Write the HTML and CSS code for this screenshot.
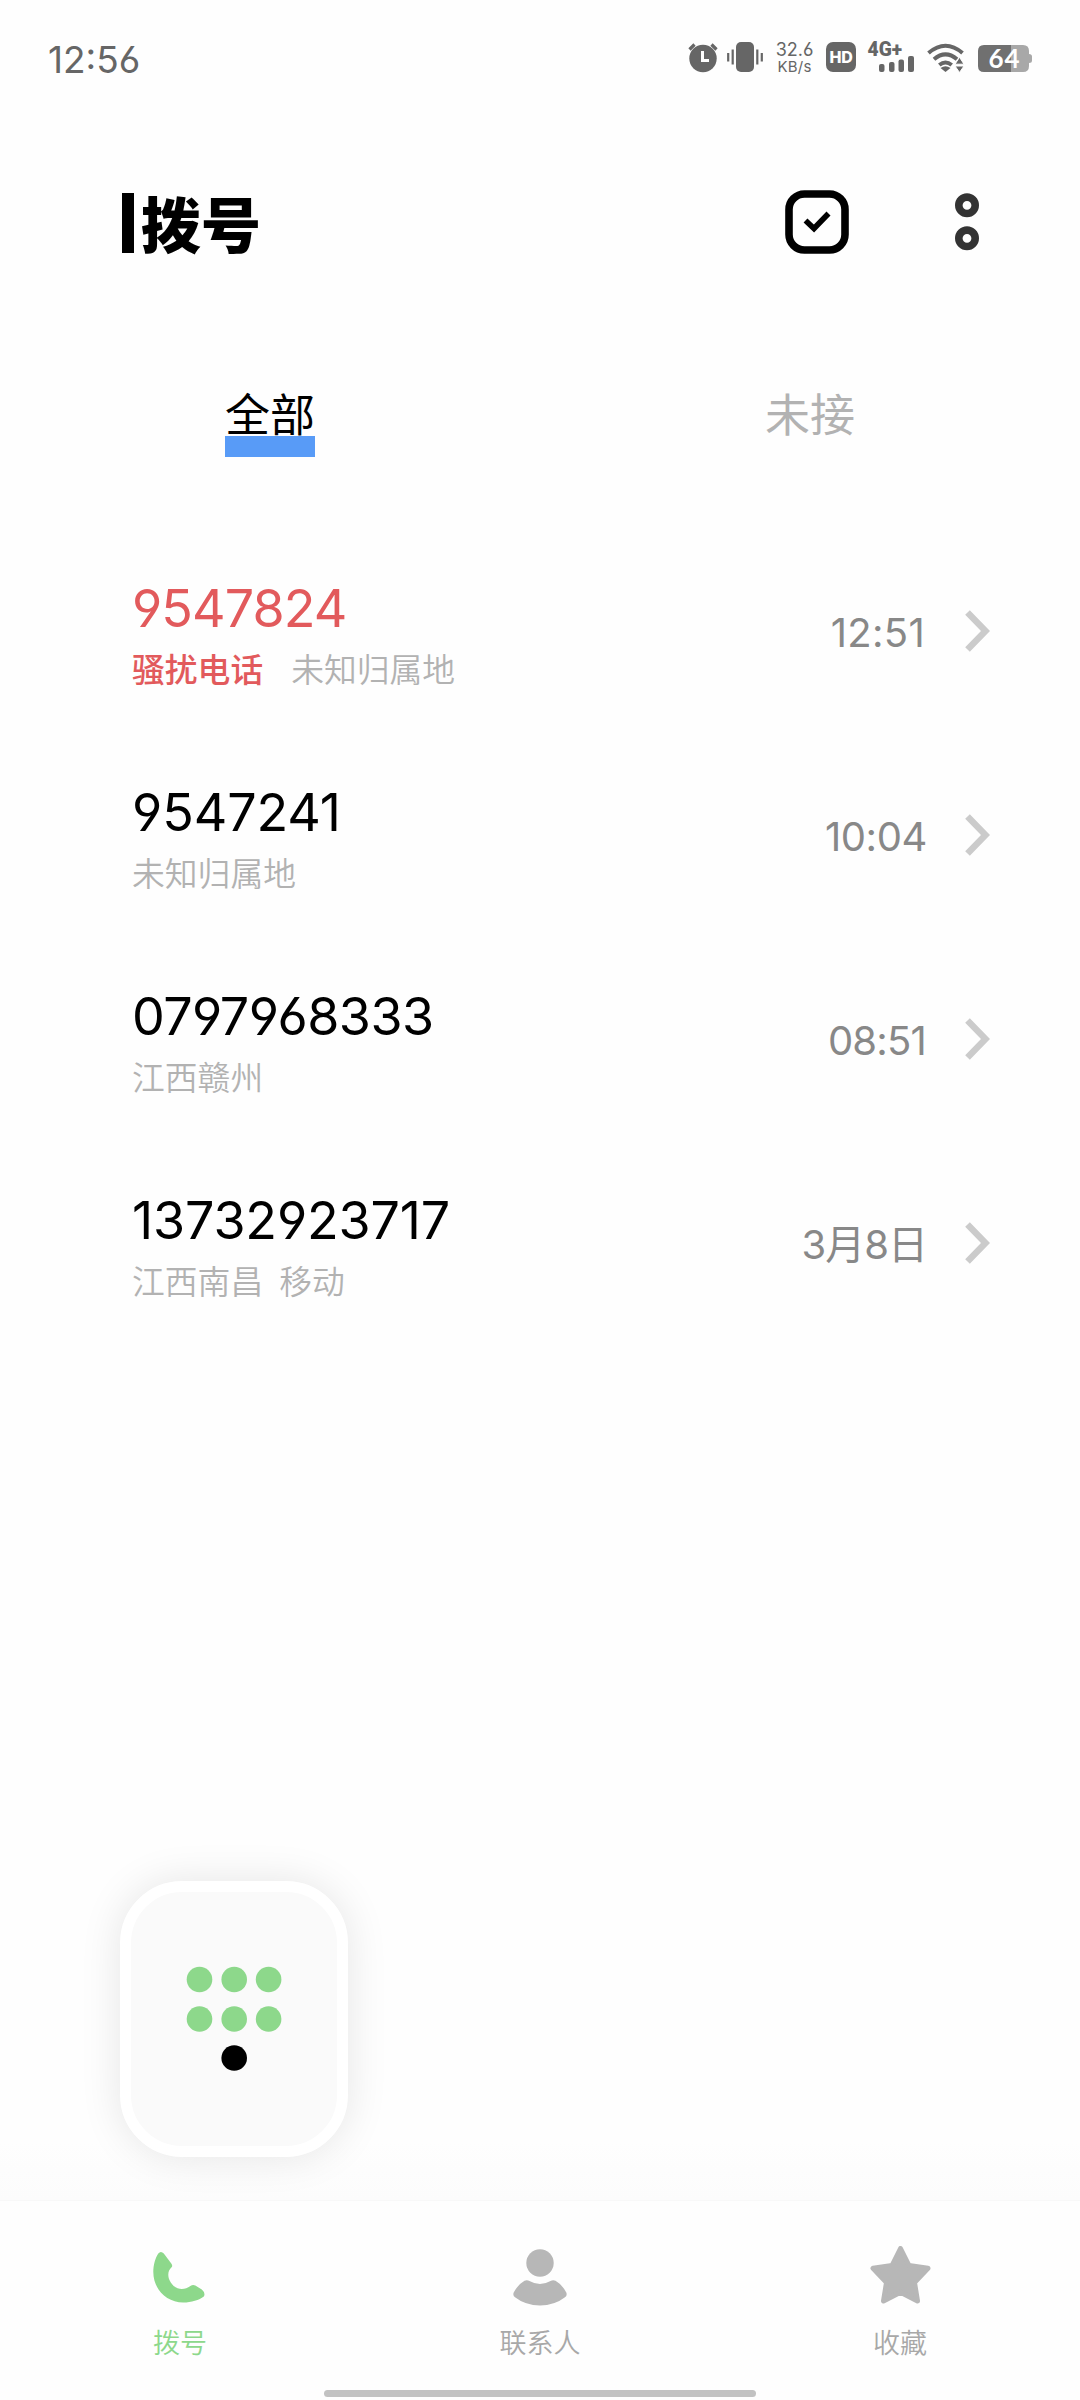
FILE: index.html
```html
<!DOCTYPE html>
<html lang="zh-CN">
<head>
<meta charset="utf-8">
<title>拨号</title>
<link rel="stylesheet" href="styles.css">
</head>
<body>
<div class="screen">
  <div class="status">
    <span class="clock">12:56</span>
    <div class="indicators">
      <svg class="i-alarm" width="30" height="32" viewBox="0 0 30 32">
        <circle cx="15" cy="16.500" r="13.700" fill="#666"/>
        <path d="M1.500 7.500l5-5M28.500 7.500l-5-5" stroke="#666" stroke-width="3.200"/>
        <path d="M14.500 9v9.500h6.500" fill="none" stroke="#fff" stroke-width="3"/>
      </svg>
      <svg class="i-vibrate" width="36" height="32" viewBox="0 0 36 32">
        <rect x="9" y="0" width="18" height="30" rx="5" fill="#666"/>
        <path d="M1.200 11v8.500M5.700 7.500v15M30.300 7.500v15M34.800 11v8.500" stroke="#666" stroke-width="2.200"/>
      </svg>
      <div class="speed"><span class="rate">32.6</span><span class="unit">KB/s</span></div>
      <div class="hd">HD</div>
      <svg class="i-signal" width="48" height="42" viewBox="0 -10 48 42">
        <text x="0.500" y="14.200" class="net" textLength="34.500" lengthAdjust="spacingAndGlyphs">4G+</text>
        <g fill="#666">
          <rect x="12" y="22" width="5.500" height="8" rx="2"/>
          <rect x="22" y="20" width="5.500" height="10" rx="2"/>
          <rect x="31.500" y="17.500" width="5.500" height="12.500" rx="2"/>
          <rect x="41" y="14" width="6" height="16" rx="2"/>
        </g>
      </svg>
      <svg class="i-wifi" width="38" height="32" viewBox="0 0 38 32">
        <g fill="none" stroke="#666" stroke-width="4">
          <path d="M1.500 11Q18.500-3.500 35.500 11"/>
          <path d="M7 17.200Q18.500 7.500 30 17.200"/>
          <path d="M12.300 23Q18.500 18 24.700 23"/>
        </g>
        <path d="M13.500 26Q18.500 22.500 23.500 26L18.500 30z" fill="#666"/>
        <path d="M28 22.200l4.500-7 4.500 7zM28 24l4.500 6.500L37 24z" fill="#666" stroke="#fff" stroke-width="1"/>
      </svg>
      <svg class="i-battery" width="55" height="32" viewBox="0 0 55 32">
        <path d="M33 3h12q6 0 6 6v3q3 0 3 2.500v4q0 2.500-3 2.500v3q0 6-6 6H33z" fill="#a8a8a8"/>
        <path d="M33 3H6Q0 3 0 9v15q0 6 6 6h27z" fill="#707070"/>
        <text x="10.500" y="25.800" class="pct" textLength="31">64</text>
      </svg>
    </div>
  </div>

  <header class="header">
    <div class="title"><i class="title-mark"></i><h1>拨号</h1></div>
    <div class="actions">
      <svg width="64" height="64" viewBox="0 0 64 64" fill="none" stroke="#000">
        <rect x="4" y="4" width="56" height="56" rx="15.500" stroke-width="7.600"/>
        <path d="M20.500 30.500l8.500 8 14.500-15" stroke-width="5.600"/>
      </svg>
      <svg width="24" height="58" viewBox="0 0 24 58" fill="none" stroke="#333" stroke-width="7.600">
        <circle cx="12" cy="12.300" r="8.200"/>
        <circle cx="12" cy="45.300" r="8.200"/>
      </svg>
    </div>
  </header>

  <nav class="tabs">
    <div class="tab active"><span>全部</span></div>
    <div class="tab"><span>未接</span></div>
  </nav>

  <main class="calls">
    <div class="call spam">
      <div class="info"><div class="number n1">9547824</div><div class="place"><span class="tag">骚扰电话</span><span>未知归属地</span></div></div>
      <div class="time t1">12:51</div>
      <svg class="chev" width="25" height="42" viewBox="0 0 25 42"><path d="M2.500 2.500l18 18.500-18 18.500"/></svg>
    </div>
    <div class="call">
      <div class="info"><div class="number n2">9547241</div><div class="place"><span>未知归属地</span></div></div>
      <div class="time t2">10:04</div>
      <svg class="chev" width="25" height="42" viewBox="0 0 25 42"><path d="M2.500 2.500l18 18.500-18 18.500"/></svg>
    </div>
    <div class="call">
      <div class="info"><div class="number n3">0797968333</div><div class="place"><span>江西赣州</span></div></div>
      <div class="time t3">08:51</div>
      <svg class="chev" width="25" height="42" viewBox="0 0 25 42"><path d="M2.500 2.500l18 18.500-18 18.500"/></svg>
    </div>
    <div class="call">
      <div class="info"><div class="number n4">13732923717</div><div class="place near"><span>江西南昌</span><span>移动</span></div></div>
      <div class="time t4">3月8日</div>
      <svg class="chev" width="25" height="42" viewBox="0 0 25 42"><path d="M2.500 2.500l18 18.500-18 18.500"/></svg>
    </div>
  </main>

  <div class="dial-area">
    <div class="dialpad">
      <svg width="96" height="106" viewBox="0 0 96 106">
        <g fill="#8dd88b">
          <circle cx="13.500" cy="13.500" r="12.800"/><circle cx="48.200" cy="13.500" r="12.800"/><circle cx="82.600" cy="13.500" r="12.800"/>
          <circle cx="13.500" cy="53" r="12.800"/><circle cx="48.200" cy="53" r="12.800"/><circle cx="82.600" cy="53" r="12.800"/>
        </g>
        <circle cx="48.200" cy="92" r="12.800"/>
      </svg>
    </div>
  </div>

  <footer class="bottom">
    <div class="nav">
      <div class="item on">
        <svg width="64" height="60" viewBox="0.700 0 64 60" fill="currentColor"><path d="M11 7.500Q13.500 4.500 16.500 7.500L24 17.500Q25.500 19.500 24.500 21C20 25 20 31 23.500 36.500C28 44 37 44.500 43 40Q45.500 38.500 48 39.500L54.500 43.500Q58.500 47 56.500 50.500C52 54 44 56.500 36 56.500C19 56.500 6 43 6 26C6 19 8 12 11 7.500z"/></svg>
        <span>拨号</span>
      </div>
      <div class="item">
        <svg width="64" height="60" viewBox="0 0 64 60" fill="#b7b7b7"><circle cx="32" cy="17" r="13.700"/><path d="M16.500 34.800Q19 33.600 21.500 35Q32 41 42.500 35Q45 33.600 47.500 34.800Q54 38.500 58.300 46.500Q59.500 49.500 57 51.300Q46.500 59.500 32 59.500Q17.500 59.500 7 51.300Q4.500 49.500 5.700 46.500Q10 38.500 16.500 34.800z"/></svg>
        <span>联系人</span>
      </div>
      <div class="item">
        <svg width="64" height="60" viewBox="0 0 64 60" fill="#b7b7b7" stroke="#b7b7b7" stroke-width="5" stroke-linejoin="round"><path d="M32.500 2.500L41 19.500 60 22.300 46.500 36.500 49.500 55 32.500 46.200 15.500 55 18.500 36.500 5 22.300 24 19.500z"/></svg>
        <span>收藏</span>
      </div>
    </div>
    <div class="home"></div>
  </footer>
</div>
</body>
</html>
```
FILE: styles.css
```css
* { box-sizing: border-box; margin: 0; padding: 0; }
body { background: #fefefe; font-family: "Noto Sans CJK SC", sans-serif; color: #000; }
svg { display: block; flex: none; }
.screen { width: 1080px; height: 2400px; display: flex; flex-direction: column; overflow: hidden; }

.status { height: 116px; padding: 0 47px 0 48px; display: flex; justify-content: space-between; align-items: flex-start; color: #666; }
.clock, .number, .time, .rate, .unit { font-family: Inter, "Noto Sans CJK SC", sans-serif; font-feature-settings: "cv03", "cv04"; white-space: nowrap; }
.clock { font-size: 37px; line-height: 40px; margin-top: 40px; }
.indicators { display: flex; padding-top: 42px; }
.i-vibrate { margin-left: 9px; }
.speed { width: 37px; margin-left: 13px; display: flex; flex-direction: column; align-items: center; }
.rate { font-size: 18px; line-height: 15px; }
.unit { font-size: 15px; line-height: 15px; margin-top: 2px; letter-spacing: 0.2px; }
.hd { width: 30px; height: 30px; margin-left: 13px; border-radius: 7px; background: #666; color: #fff; font: 800 16px/31px Inter, sans-serif; text-align: center; letter-spacing: -0.2px; }
.i-signal { margin: -10px 0 0 11px; }
.net { font: 900 20px Roboto, sans-serif; fill: #666; }
.i-wifi { margin-left: 12px; }
.i-battery { margin-left: 13px; }
.pct { font: 700 26px Lato, sans-serif; fill: #fff; }

.header { height: 230px; padding: 74px 101px 0 122px; display: flex; justify-content: space-between; align-items: flex-start; }
.title { display: flex; padding-top: 3px; }
.title-mark { width: 12px; height: 60px; background: #000; }
.title h1 { margin: -2px 0 0 7px; font-size: 60px; line-height: 62px; font-weight: 900; }
.actions { display: flex; gap: 106px; align-items: center; }

.tabs { height: 182px; padding-top: 40px; display: grid; grid-template-columns: 1fr 1fr; justify-items: center; align-items: start; }
.tab span { display: block; padding-top: 2px; height: 71px; font-size: 45px; line-height: 50px; color: #b2b2b2; border-bottom: 21px solid transparent; }
.tab.active span { color: #000; border-color: #589bf7; }

.call { height: 204px; padding: 0 90px 0 132px; display: flex; align-items: center; }
.info { flex: 1; height: 109px; display: flex; flex-direction: column; gap: 9px; margin-top: 7px; }
.number { font-size: 52px; line-height: 60px; }
.n1 { letter-spacing: -0.9px; }
.n2 { letter-spacing: -0.1px; }
.n3 { letter-spacing: -0.55px; }
.n4 { letter-spacing: -0.15px; }
.place { display: flex; gap: 28px; font-size: 32.8px; line-height: 40px; color: #b2b2b2; font-weight: 350; }
.place.near { gap: 16px; }
.spam .number, .tag { color: #e25a5c; }
.tag { font-weight: 500; }
.time { font-size: 40px; line-height: 50px; color: #888; margin-top: 5px; }
.t1 { letter-spacing: 0.3px; margin-right: 2px; }
.t2 { letter-spacing: -0.4px; }
.t3 { letter-spacing: -0.8px; margin-right: 1px; }
.t4 { letter-spacing: -1px; }
.chev { margin: 1px 0 0 38px; fill: none; stroke: #cbcbcb; stroke-width: 6.500; }

.dial-area { flex: 1; padding: 0 120px 43px; display: flex; align-items: flex-end; background: linear-gradient(to top, #fcfcfc, #fefefe 60px); }
.dialpad { width: 228px; height: 276px; border: 11px solid #fff; border-radius: 62px; background: #fafafa; box-shadow: 0 0 42px rgba(0, 0, 0, 0.1); display: flex; align-items: center; justify-content: center; }

.bottom { height: 200px; background: #fefefe; border-top: 1px solid #f8f8f8; display: flex; flex-direction: column; align-items: center; }
.nav { width: 1080px; height: 189px; display: grid; grid-template-columns: repeat(3, 1fr); }
.item { display: flex; flex-direction: column; align-items: center; padding-top: 45px; color: #a8a8a8; }
.item span { font-size: 27px; line-height: 36px; margin-top: 18px; font-weight: 350; }
.item.on { color: #8dd88b; }
.home { width: 432px; height: 7px; border-radius: 4px; background: #c2c2c2; }
```
